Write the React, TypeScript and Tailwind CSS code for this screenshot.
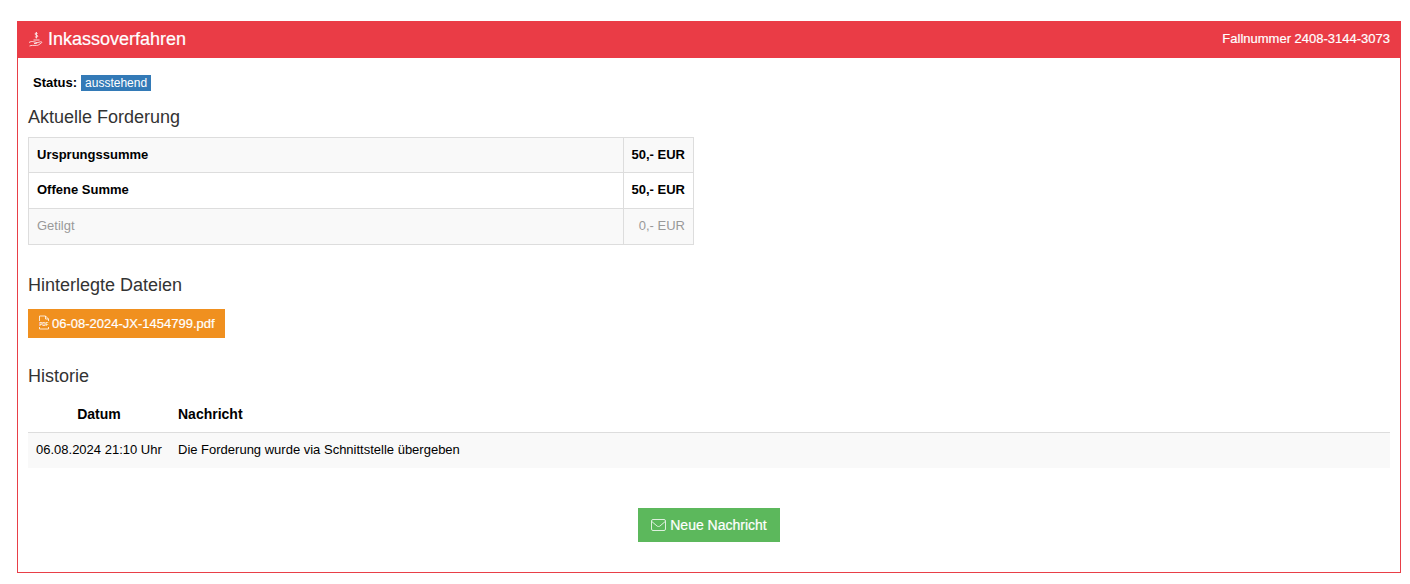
import React from 'react';

const font = { fontFamily: '"Liberation Sans", Arial, sans-serif' };

function CollectIcon() {
    return (
        <svg width="16" height="16" viewBox="0 0 16 16" fill="none" stroke="currentColor" strokeWidth="0.8" className="mr-[4px] mt-[1px]">
            <path d="M1 11.500c1.500-1 3-1.200 4.500-.8l2.500.6c.8.200.8 1.200 0 1.200H6" />
            <path d="M8 12l4.500-1.200c1-.3 1.800.4 1 1.100l-3 2c-.6.400-1.200.5-2 .5H4.500c-1 0-2 .2-3 .6" />
            <path d="M9.500 2.500C9 1.800 7 1.800 7 3c0 1.300 2.800.8 2.800 2.200 0 1.200-2.300 1.200-2.900.4M8.400 1v6.500" />
            <path d="M5.500 9h6" />
        </svg>
    );
}

function PdfIcon() {
    return (
        <svg width="12" height="15" viewBox="0 0 12 15" fill="none" stroke="currentColor" strokeWidth="0.8" className="mr-[2px] mb-[2px]">
            <path d="M1.500 6V1h6l3 3v2M7.500 1v3h3M1.500 12v2h9v-2" />
            <text x="6" y="10.800" textAnchor="middle" fontSize="4.500" fontWeight="700" fill="currentColor" stroke="none">PDF</text>
        </svg>
    );
}

function MailIcon() {
    return (
        <svg width="15" height="12" viewBox="0 0 15 12" fill="none" stroke="currentColor" strokeWidth="1" className="mr-[4px] opacity-80">
            <rect x="0.500" y="0.500" width="14" height="11" rx="1.500" />
            <path d="M0.800 2.500L6 7c.9.700 2.100.700 3 0l5.200-4.500" />
        </svg>
    );
}

export default function App() {
    return (
        <div className="bg-white h-[584px] pt-[21px] pl-[17px] pr-[9px] text-black" style={font}>
            <section className="h-[552px] border border-[#e83f48]">
                <header className="-mx-px -mt-px h-[37px] bg-[#ea3c46] text-white flex items-center justify-between pl-[11px] pr-[11px] [-webkit-text-stroke:0.2px_white]">
                    <h1 className="flex items-center text-[18px] leading-none mb-[2px]">
                        <CollectIcon />
                        Inkassoverfahren
                    </h1>
                    <span className="text-[13px] mb-[1px]">Fallnummer 2408-3144-3073</span>
                </header>

                <div className="pl-[10px] pr-[10px]">
                    <p className="pl-[5px] pt-[17px] h-[32px] flex items-center text-[13px] leading-none">
                        <b className="mr-[4px]">Status:</b>
                        <span className="bg-[#337ab7] text-white text-[12px] px-[4px] h-[16px] leading-[16px]">ausstehend</span>
                    </p>

                    <h2 className="mt-[17px] text-[18px] leading-[20px] text-[#333]">Aktuelle Forderung</h2>
                    <table className="mt-[10px] w-[666px] border-collapse text-[13px]">
                        <tbody>
                            <tr className="h-[35px] bg-[#f9f9f9] font-bold">
                                <td className="border border-[#ddd] px-[8px]">Ursprungssumme</td>
                                <td className="border border-[#ddd] px-[8px] w-[70px] text-right whitespace-nowrap">50,- EUR</td>
                            </tr>
                            <tr className="h-[36px] font-bold">
                                <td className="border border-[#ddd] px-[8px] pb-[2px]">Offene Summe</td>
                                <td className="border border-[#ddd] px-[8px] pb-[2px] text-right whitespace-nowrap">50,- EUR</td>
                            </tr>
                            <tr className="h-[36px] text-[#999] bg-[#f9f9f9]">
                                <td className="border border-[#ddd] px-[8px] pb-[2px]">Getilgt</td>
                                <td className="border border-[#ddd] px-[8px] pb-[2px] text-right whitespace-nowrap">0,- EUR</td>
                            </tr>
                        </tbody>
                    </table>

                    <h2 className="mt-[30px] text-[18px] leading-[20px] text-[#333]">Hinterlegte Dateien</h2>
                    <div className="mt-[14px] inline-flex items-center h-[29px] px-[10px] bg-[#f0901f] text-white text-[13px] [-webkit-text-stroke:0.2px_white]">
                        <PdfIcon />
                        06-08-2024-JX-1454799.pdf
                    </div>

                    <h2 className="mt-[28px] text-[18px] leading-[20px] text-[#333]">Historie</h2>
                    <table className="mt-[10px] w-full border-collapse text-[13px]">
                        <thead>
                            <tr className="h-[36px] border-b border-[#ddd] text-[14px]">
                                <th className="w-[142px] text-center font-bold pt-[2px]">Datum</th>
                                <th className="text-left font-bold pl-[8px] pt-[2px]">Nachricht</th>
                            </tr>
                        </thead>
                        <tbody>
                            <tr className="h-[36px] bg-[#f9f9f9]">
                                <td className="pl-[8px] pb-[2px] whitespace-nowrap">06.08.2024 21:10 Uhr</td>
                                <td className="pl-[8px] pb-[2px]">Die Forderung wurde via Schnittstelle übergeben</td>
                            </tr>
                        </tbody>
                    </table>

                    <div className="mt-[40px] flex justify-center">
                        <button className="h-[34px] px-[13px] inline-flex items-center bg-[#5cb85c] text-white text-[14px] [-webkit-text-stroke:0.2px_white]">
                            <MailIcon />
                            Neue Nachricht
                        </button>
                    </div>
                </div>
            </section>
        </div>
    );
}
